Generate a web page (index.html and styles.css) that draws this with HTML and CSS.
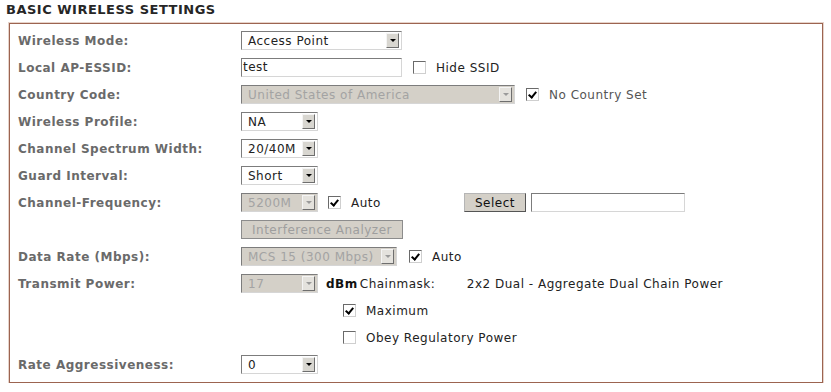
FILE: index.html
```html
<!DOCTYPE html>
<html lang="en">
<head>
    <meta charset="UTF-8">
    <title>Basic Wireless Settings</title>
    <link rel="stylesheet" href="styles.css">
</head>
<body>

    <div class="page">
        <h2 class="title">BASIC WIRELESS SETTINGS</h2>

        <div class="settings-box">
            <!-- Wireless Mode -->
            <div class="row">
                <label class="field-label">Wireless Mode:</label>
                <div class="select w-mode"><span class="select-text">Access Point</span><span class="arrow"></span></div>
            </div>

            <!-- SSID -->
            <div class="row">
                <label class="field-label">Local AP-ESSID:</label>
                <div class="text-input w-mode">test</div>
                <span class="check ml-11"></span>
                <span class="opt-label">Hide SSID</span>
            </div>

            <!-- Country -->
            <div class="row">
                <label class="field-label">Country Code:</label>
                <div class="select disabled w-country"><span class="select-text">United States of America</span><span class="arrow"></span></div>
                <span class="check checked ml-11"></span>
                <span class="opt-label muted">No Country Set</span>
            </div>

            <div class="row">
                <label class="field-label">Wireless Profile:</label>
                <div class="select w-small"><span class="select-text">NA</span><span class="arrow"></span></div>
            </div>

            <div class="row">
                <label class="field-label">Channel Spectrum Width:</label>
                <div class="select w-small"><span class="select-text">20/40M</span><span class="arrow"></span></div>
            </div>

            <div class="row">
                <label class="field-label">Guard Interval:</label>
                <div class="select w-small"><span class="select-text">Short</span><span class="arrow"></span></div>
            </div>

            <!-- Channel / frequency -->
            <div class="row">
                <label class="field-label">Channel-Frequency:</label>
                <div class="select disabled w-small"><span class="select-text">5200M</span><span class="arrow"></span></div>
                <span class="check checked ml-10"></span>
                <span class="opt-label auto-label">Auto</span>
                <button class="btn w-select">Select</button>
                <div class="text-input w-chan"></div>
            </div>

            <div class="row">
                <span class="field-label"></span>
                <button class="btn disabled w-analyzer">Interference Analyzer</button>
            </div>

            <div class="row">
                <label class="field-label">Data Rate (Mbps):</label>
                <div class="select disabled w-rate"><span class="select-text">MCS 15 (300 Mbps)</span><span class="arrow"></span></div>
                <span class="check checked ml-12"></span>
                <span class="opt-label">Auto</span>
            </div>

            <!-- Transmit power -->
            <div class="row">
                <label class="field-label">Transmit Power:</label>
                <div class="select disabled w-small"><span class="select-text">17</span><span class="arrow"></span></div>
                <b class="unit">dBm</b>
                <span class="chain-label">Chainmask:</span>
                <span>2x2 Dual - Aggregate Dual Chain Power</span>
            </div>

            <div class="row">
                <span class="field-label"></span>
                <span class="check checked indent"></span>
                <span class="opt-label">Maximum</span>
            </div>

            <div class="row">
                <span class="field-label"></span>
                <span class="check indent"></span>
                <span class="opt-label">Obey Regulatory Power</span>
            </div>

            <div class="row">
                <label class="field-label">Rate Aggressiveness:</label>
                <div class="select w-small"><span class="select-text">0</span><span class="arrow"></span></div>
            </div>
        </div>
    </div>

</body>
</html>
```

FILE: styles.css
```css
body {
    margin: 0;
    background-color: #fff;
    font-family: "DejaVu Sans", Verdana, sans-serif;
    font-size: 12px;
    letter-spacing: 0.5px;
    color: #222;
}
.page {
    padding: 0 8px 0 9px;
}
.title {
    margin: 0 0 0 -3px;
    height: 23px;
    line-height: 19px;
    font-size: 13px;
    font-weight: bold;
    color: #262626;
}
.settings-box {
    border: 1px solid #9c6450;
    box-shadow: 0 0 0 1px #e6d3ca;
    padding: 3px 0 4px 8px;
}
.row {
    display: flex;
    align-items: center;
    height: 27px;
    white-space: nowrap;
}
.field-label {
    width: 223px;
    flex: none;
    font-weight: bold;
    color: #6a6a6a;
}

/* fake select boxes */
.select {
    display: flex;
    align-items: center;
    box-sizing: border-box;
    height: 19px;
    border: 1px solid;
    border-color: #7c7c7c #d6d6d6 #d6d6d6 #7c7c7c;
    background-color: #fff;
    flex: none;
}
.select-text {
    flex: 1;
    padding-left: 6px;
    overflow: hidden;
}
.arrow {
    position: relative;
    flex: none;
    width: 11px;
    height: 13px;
    margin-right: 2px;
    border: 1px solid;
    border-color: #f4f4f4 #6e6e6e #6e6e6e #f4f4f4;
    background-color: #d8d6d0;
}
.arrow::after {
    content: "";
    position: absolute;
    left: 3px;
    top: 5px;
    border-left: 3px solid transparent;
    border-right: 3px solid transparent;
    border-top: 3px solid #000;
}
.select.disabled {
    background-color: #d4d0c8;
    color: #a3a3a3;
}
.select.disabled .arrow {
    background-color: #e4e2dd;
}
.select.disabled .arrow::after {
    border-top-color: #9a9a9a;
}
.w-mode { width: 161px; }
.w-country { width: 274px; }
.w-small { width: 77px; }
.w-rate { width: 156px; }
.w-chan { width: 154px; }

.text-input {
    box-sizing: border-box;
    height: 19px;
    line-height: 17px;
    padding-left: 1px;
    border: 1px solid;
    border-color: #7c7c7c #d6d6d6 #d6d6d6 #7c7c7c;
    background-color: #fff;
    flex: none;
}

/* checkboxes */
.check {
    box-sizing: border-box;
    width: 13px;
    height: 13px;
    border: 1px solid;
    border-color: #6a6a6a #cfcfcf #cfcfcf #6a6a6a;
    background-color: #fff;
    flex: none;
    position: relative;
}
.check.checked::after {
    content: "";
    position: absolute;
    left: 3px;
    top: 1px;
    width: 3px;
    height: 6px;
    border: solid #000;
    border-width: 0 2px 2px 0;
    transform: rotate(40deg);
}
.ml-10 { margin-left: 10px; }
.ml-11 { margin-left: 11px; }
.ml-12 { margin-left: 12px; }
.indent { margin-left: 102px; }
.opt-label {
    margin-left: 10px;
}
.opt-label.muted {
    color: #555;
}
.auto-label {
    width: 113px;
    flex: none;
}

.btn {
    box-sizing: border-box;
    height: 19px;
    padding: 0;
    font-family: inherit;
    font-size: 12px;
    letter-spacing: 0.5px;
    color: #111;
    border: 1px solid;
    border-color: #b5b5b5 #555 #555 #b5b5b5;
    background-color: #d4d0c8;
    flex: none;
}
.btn.disabled {
    color: #9e9e9e;
    border-color: #8c8c8c;
}
.w-select {
    width: 62px;
    margin-right: 5px;
}
.w-analyzer { width: 162px; }

.unit {
    margin-left: 8px;
    color: #111;
}
.chain-label {
    width: 107px;
    margin-left: 2px;
    flex: none;
}
```
